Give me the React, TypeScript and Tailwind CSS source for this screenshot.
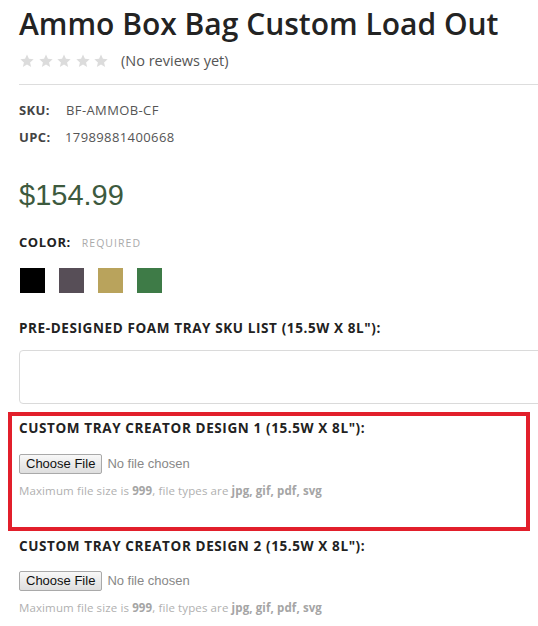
import React from 'react';

const swatches = ['#000000', '#574e57', '#b9a35c', '#3e7b47'];

const Star: React.FC = () => (
  <svg viewBox="0 0 24 24" className="w-[16px] h-[16px]" fill="#dcdcdc">
    <path d="M12 2.2l2.9 6.6 7.1.6-5.4 4.7 1.6 7-6.2-3.7-6.2 3.7 1.6-7L2 9.4l7.1-.6z" />
  </svg>
);

const FileField: React.FC = () => (
  <div className="flex items-center gap-[5px] h-5 font-['Liberation_Sans',Arial,sans-serif] text-[13px]">
    <span className="h-5 px-[6px] flex items-center border border-[#a9a9a9] rounded-[2px] bg-gradient-to-b from-[#f8f8f8] to-[#dedede] text-[#111]">
      Choose File
    </span>
    <span className="text-[#888]">No file chosen</span>
  </div>
);

const FileHint: React.FC = () => (
  <p className="text-[11.5px] tracking-[0.01em] text-[#b0b0b0]">
    Maximum file size is <b className="font-bold text-[#a5a5a5]">999</b>, file types are{' '}
    <b className="font-bold text-[#a5a5a5]">jpg, gif, pdf, svg</b>
  </p>
);

const FieldLabel: React.FC<{ children: React.ReactNode }> = ({ children }) => (
  <h4 className="text-[13.5px] font-bold tracking-[0.045em] text-[#222] uppercase">{children}</h4>
);

export default function App() {
  return (
    <div className="w-[538px] h-[626px] overflow-hidden bg-white font-['Open_Sans',sans-serif]">
      <div className="w-[560px] pl-[19px]">
        {/* title + reviews */}
        <h1 className="pt-[4px] text-[30px] leading-[40px] font-semibold text-[#232323]">
          Ammo Box Bag Custom Load Out
        </h1>
        <div className="mt-[6px] flex items-center h-[22px]">
          <div className="flex gap-[2.5px]">
            <Star />
            <Star />
            <Star />
            <Star />
            <Star />
          </div>
          <span className="ml-[12px] text-[14.5px] text-[#555]">(No reviews yet)</span>
        </div>
        <div className="mt-[12px] border-t border-[#dddddd]" />

        {/* sku / upc */}
        <dl className="mt-[17px] text-[13px] text-[#555] tracking-[0.03em] space-y-[9px]">
          <div className="flex h-[18px] items-center">
            <dt className="w-[47px] font-bold text-[#444]">SKU:</dt>
            <dd>BF-AMMOB-CF</dd>
          </div>
          <div className="flex h-[18px] items-center">
            <dt className="w-[46px] font-bold text-[#444]">UPC:</dt>
            <dd>17989881400668</dd>
          </div>
        </dl>

        {/* price */}
        <div className="mt-[31px] text-[29px] leading-[34px] text-[#3d5a3e] font-['Liberation_Sans',Arial,sans-serif]">
          $154.99
        </div>

        {/* color */}
        <div className="mt-[21px] flex items-baseline h-[18px]">
          <span className="text-[13px] font-bold tracking-[0.04em] text-[#222]">COLOR:</span>
          <span className="ml-[11px] text-[10.5px] tracking-[0.1em] text-[#aaa]">REQUIRED</span>
        </div>
        <div className="mt-[17px] pl-px flex gap-[14px]">
          {swatches.map((c) => (
            <span key={c} className="w-[25px] h-[25px]" style={{ backgroundColor: c }} />
          ))}
        </div>

        {/* pre-designed */}
        <div className="mt-[26px] h-[18px] flex items-center">
          <FieldLabel>Pre-Designed Foam Tray SKU List (15.5W X 8L"):</FieldLabel>
        </div>
        <div className="mt-[13px] h-[54px] border border-[#dadada] rounded-[4px]" />

        {/* design 1 (highlighted) */}
        <div className="mt-[8px] -ml-[11px] w-[522px] h-[119px] border-4 border-[#e21f2b] pl-[7px] pt-[3px]">
          <div className="h-[18px] flex items-center">
            <FieldLabel>Custom Tray Creator Design 1 (15.5W X 8L"):</FieldLabel>
          </div>
          <div className="mt-[17px]">
            <FileField />
          </div>
          <div className="mt-[8px]">
            <FileHint />
          </div>
        </div>

        {/* design 2 */}
        <div className="mt-[6px] h-[18px] flex items-center">
          <FieldLabel>Custom Tray Creator Design 2 (15.5W X 8L"):</FieldLabel>
        </div>
        <div className="mt-[16px]">
          <FileField />
        </div>
        <div className="mt-[8px]">
          <FileHint />
        </div>
      </div>
    </div>
  );
}
